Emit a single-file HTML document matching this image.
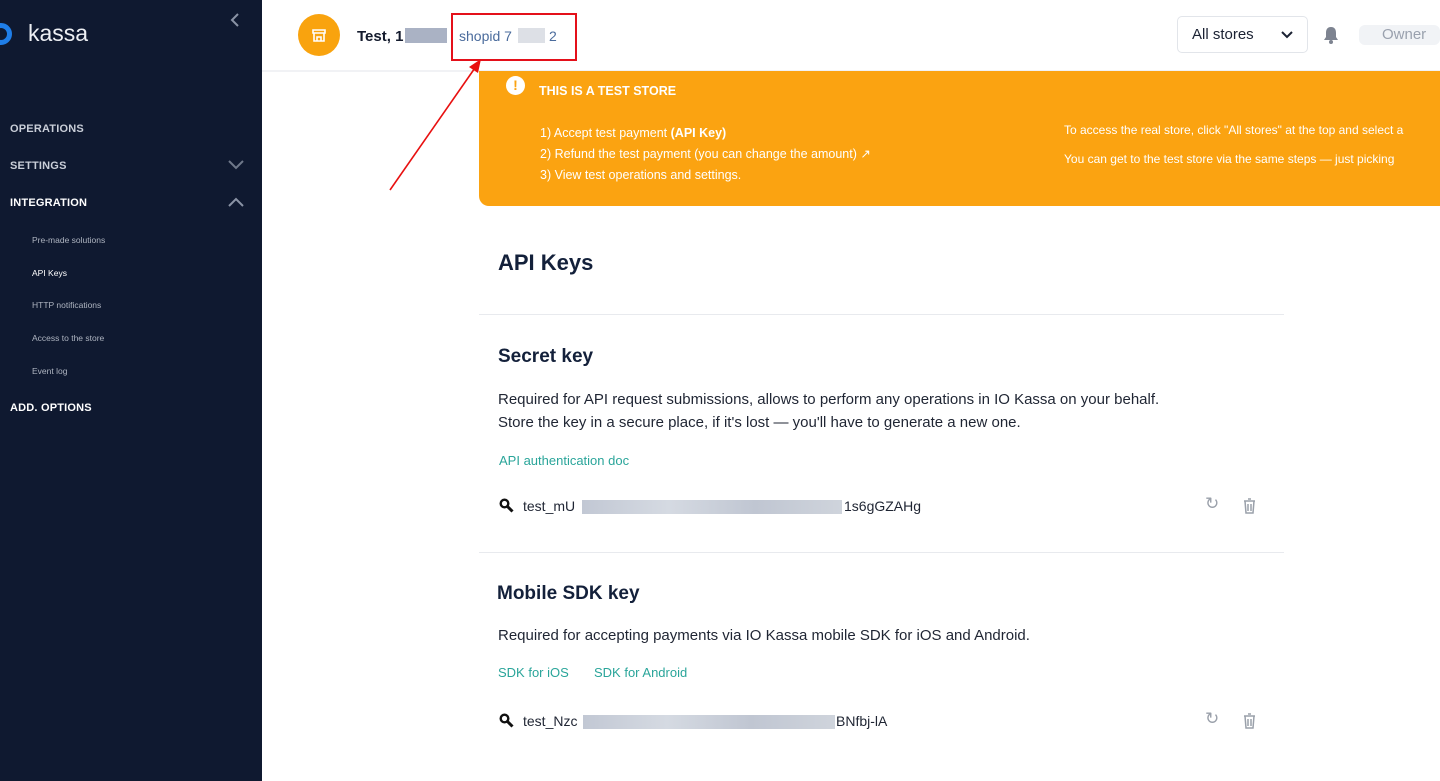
<!DOCTYPE html>
<html><head><meta charset="utf-8"><style>
*{margin:0;padding:0;box-sizing:border-box}
body{width:1440px;height:781px;overflow:hidden;background:#fff;font-family:"Liberation Sans",sans-serif;position:relative}
.a{position:absolute;white-space:nowrap}
#sb{position:absolute;left:0;top:0;width:262px;height:781px;background:#0f1930}
.nav{color:#c9ced8;font-size:11px;font-weight:bold;letter-spacing:.2px}
.sub{color:#aeb4c0;font-size:8.5px}
.t{color:#1f2533;font-size:15px}
.lnk{color:#2aa59a;font-size:13px}
.blur{background:linear-gradient(90deg,#c2c8d4,#d5dae2,#c0c6d2,#cfd4dc);height:14px}
</style></head><body>
<div id="sb">
 <div class="a" style="left:-10px;top:23px;width:22px;height:22px;border-radius:50%;border:5px solid #1f7ee8"></div>
 <div class="a" style="left:28px;top:20px;color:#eef0f4;font-size:23px">kassa</div>
 <svg class="a" style="left:229px;top:12px" width="12" height="16"><path d="M9 2L3 8l6 6" stroke="#8a93a5" stroke-width="2" fill="none"/></svg>
 <div class="a nav" style="left:10px;top:123px">OPERATIONS</div>
 <div class="a nav" style="left:10px;top:160px">SETTINGS</div>
 <svg class="a" style="left:228px;top:160px" width="16" height="10"><path d="M1 1l7 7 7-7" stroke="#6f788a" stroke-width="2" fill="none"/></svg>
 <div class="a nav" style="left:10px;top:197px;color:#fff">INTEGRATION</div>
 <svg class="a" style="left:228px;top:197px" width="16" height="10"><path d="M1 9l7-7 7 7" stroke="#8a93a5" stroke-width="2" fill="none"/></svg>
 <div class="a sub" style="left:32px;top:235px">Pre-made solutions</div>
 <div class="a sub" style="left:32px;top:268px;color:#fff">API Keys</div>
 <div class="a sub" style="left:32px;top:300px">HTTP notifications</div>
 <div class="a sub" style="left:32px;top:333px">Access to the store</div>
 <div class="a sub" style="left:32px;top:366px">Event log</div>
 <div class="a nav" style="left:10px;top:402px;color:#fff">ADD. OPTIONS</div>
</div>
<div class="a" style="left:262px;top:70px;width:1178px;height:2px;background:#f1f2f5"></div>
<div class="a" style="left:298px;top:14px;width:42px;height:42px;border-radius:50%;background:#f9a30e"></div>
<svg class="a" style="left:311px;top:27px" width="16" height="16"><path d="M2 3h12v3H2zM3 6v8h10V6M6 14v-4h4v4" stroke="#fff" stroke-width="1.6" fill="none"/></svg>
<div class="a" style="left:357px;top:28px;font-size:15px;font-weight:bold;color:#141b2d">Test, 1</div>
<div class="a" style="left:405px;top:28px;width:42px;height:15px;background:#aab2c4"></div>
<div class="a" style="left:459px;top:28px;font-size:14px;color:#4a6b9c">shopid 7</div>
<div class="a" style="left:518px;top:28px;width:27px;height:15px;background:#dde0e6"></div>
<div class="a" style="left:549px;top:28px;font-size:14px;color:#4a6b9c">2</div>
<div class="a" style="left:451px;top:13px;width:126px;height:48px;border:2px solid #e4101a"></div>
<svg class="a" style="left:385px;top:55px" width="110" height="140"><path d="M5 135L92 10" stroke="#e81010" stroke-width="1.6"/><path d="M96 4L84 12 93 18z" fill="#e81010"/></svg>
<div class="a" style="left:1177px;top:16px;width:131px;height:37px;border:1px solid #e2e5ea;border-radius:5px"></div>
<div class="a" style="left:1192px;top:26px;font-size:15px;color:#1b2233">All stores</div>
<svg class="a" style="left:1281px;top:31px" width="12" height="8"><path d="M1 1l5 5 5-5" stroke="#1b2233" stroke-width="2" fill="none"/></svg>
<svg class="a" style="left:1322px;top:25px" width="18" height="20"><path d="M9 2c-4 0-5 3-5 6v4l-2 3h14l-2-3V8c0-3-1-6-5-6z" fill="#7d8390"/><circle cx="9" cy="17" r="2" fill="#7d8390"/></svg>
<div class="a" style="left:1359px;top:25px;width:81px;height:20px;background:#f1f3f6;border-radius:6px"></div>
<div class="a" style="left:1382px;top:26px;font-size:15px;color:#9aa1ae">Owner</div>
<div class="a" style="left:479px;top:71px;width:980px;height:135px;background:#fba311;border-radius:0 0 0 10px"></div>
<div class="a" style="left:506px;top:76px;width:19px;height:19px;border-radius:50%;background:#fff;color:#fba311;font-weight:bold;font-size:14px;text-align:center;line-height:19px">!</div>
<div class="a" style="left:539px;top:84px;color:#fff;font-size:12.5px;font-weight:bold">THIS IS A TEST STORE</div>
<div class="a" style="left:540px;top:123px;color:#fff;font-size:12.5px;line-height:21px">1) Accept test payment <b>(API Key)</b><br>2) Refund the test payment (you can change the amount) &#8599;<br>3) View test operations and settings.</div>
<div class="a" style="left:1064px;top:116px;color:#fff;font-size:12px;line-height:29px">To access the real store, click "All stores" at the top and select a<br>You can get to the test store via the same steps — just picking</div>
<div class="a" style="left:498px;top:250px;font-size:22px;font-weight:bold;color:#13203a">API Keys</div>
<div class="a" style="left:479px;top:314px;width:805px;height:1px;background:#e8eaee"></div>
<div class="a" style="left:498px;top:346px;font-size:19px;font-weight:bold;color:#13203a">Secret key</div>
<div class="a t" style="left:498px;top:388px;line-height:23px">Required for API request submissions, allows to perform any operations in IO Kassa on your behalf.<br>Store the key in a secure place, if it's lost — you'll have to generate a new one.</div>
<div class="a lnk" style="left:499px;top:453px">API authentication doc</div>
<svg class="a" style="left:499px;top:498px" width="15" height="15"><circle cx="5.5" cy="5.5" r="3.8" stroke="#111" stroke-width="2.4" fill="none"/><path d="M8.5 8.5l5 5" stroke="#111" stroke-width="3"/></svg>
<div class="a t" style="left:523px;top:498px;font-size:14px">test_mU</div>
<div class="a blur" style="left:582px;top:500px;width:260px"></div>
<div class="a t" style="left:844px;top:498px;font-size:14px">1s6gGZAHg</div>
<div class="a" style="left:1205px;top:494px;font-size:17px;color:#9aa0aa">&#x21bb;</div>
<svg class="a" style="left:1243px;top:498px" width="13" height="16"><path d="M1 3h11M5 1h3M2 3l1 12h7l1-12M5 6v7M8 6v7" stroke="#9aa0aa" stroke-width="1.5" fill="none"/></svg>
<div class="a" style="left:479px;top:552px;width:805px;height:1px;background:#e8eaee"></div>
<div class="a" style="left:497px;top:583px;font-size:19px;font-weight:bold;color:#13203a">Mobile SDK key</div>
<div class="a t" style="left:498px;top:627px">Required for accepting payments via IO Kassa mobile SDK for iOS and Android.</div>
<div class="a lnk" style="left:498px;top:665px">SDK for iOS</div>
<div class="a lnk" style="left:594px;top:665px">SDK for Android</div>
<svg class="a" style="left:499px;top:713px" width="15" height="15"><circle cx="5.5" cy="5.5" r="3.8" stroke="#111" stroke-width="2.4" fill="none"/><path d="M8.5 8.5l5 5" stroke="#111" stroke-width="3"/></svg>
<div class="a t" style="left:523px;top:713px;font-size:14px">test_Nzc</div>
<div class="a blur" style="left:583px;top:715px;width:252px"></div>
<div class="a t" style="left:836px;top:713px;font-size:14px">BNfbj-lA</div>
<div class="a" style="left:1205px;top:709px;font-size:17px;color:#9aa0aa">&#x21bb;</div>
<svg class="a" style="left:1243px;top:713px" width="13" height="16"><path d="M1 3h11M5 1h3M2 3l1 12h7l1-12M5 6v7M8 6v7" stroke="#9aa0aa" stroke-width="1.5" fill="none"/></svg>
</body></html>
